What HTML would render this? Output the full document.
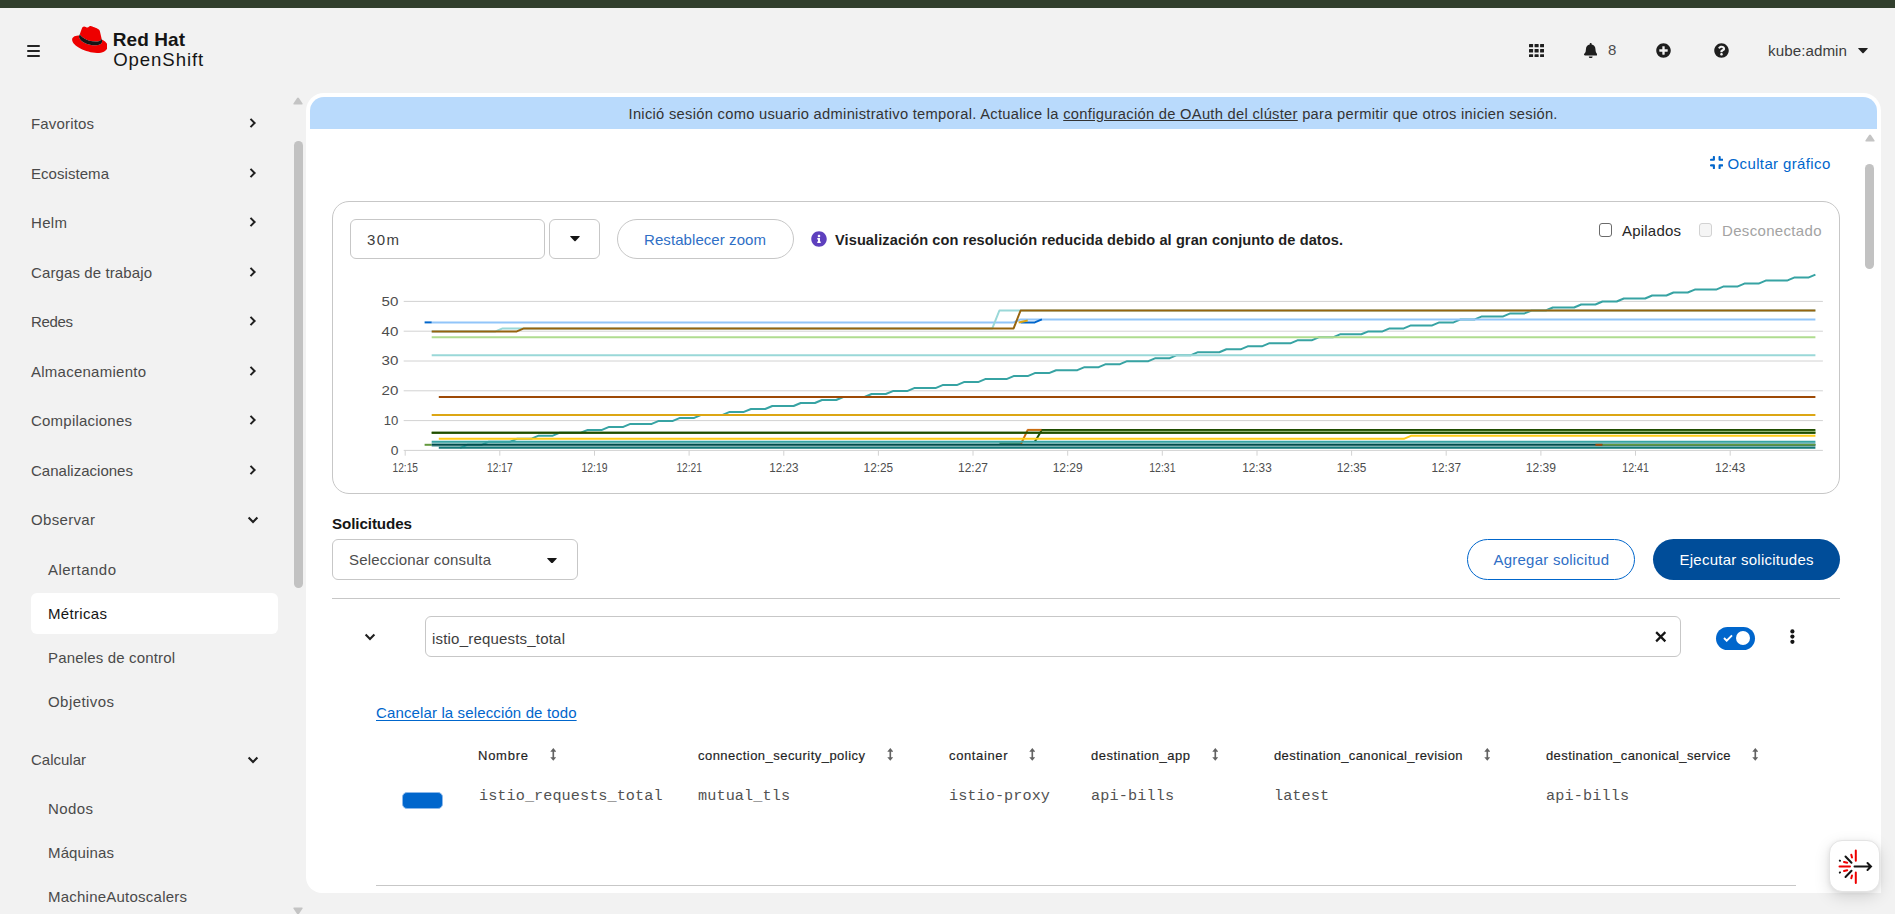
<!DOCTYPE html>
<html lang="es"><head><meta charset="utf-8"><title>Métricas · Red Hat OpenShift</title>
<style>
:root{--s:"Liberation Sans",sans-serif;--m:"Liberation Mono",monospace}
*{box-sizing:border-box}
html,body{margin:0;padding:0}
body{width:1895px;height:914px;overflow:hidden;background:#f2f2f2;font-family:var(--s);position:relative;color:#151515}
.abs{position:absolute;display:block}
.t{position:absolute;white-space:nowrap;line-height:20px;height:20px;font-family:var(--s)}
.box{position:absolute;background:#fff;border:1px solid #c7c7c7;border-radius:6px}
</style></head>
<body>

<div class="abs" style="left:0;top:0;width:1895px;height:7.5px;background:#313f2d"></div>
<!-- hamburger -->
<div class="abs" style="left:27px;top:45px;width:13.4px;height:2.4px;background:#242424;border-radius:1px"></div>
<div class="abs" style="left:27px;top:49.8px;width:13.4px;height:2.4px;background:#242424;border-radius:1px"></div>
<div class="abs" style="left:27px;top:54.6px;width:13.4px;height:2.4px;background:#242424;border-radius:1px"></div>
<!-- logo hat -->
<svg class="abs" style="left:71.6px;top:25.9px" width="35.8" height="27" viewBox="0 0 192 145"><path fill="#e00" d="M127.47,83.49c12.51,0,30.61-2.58,30.61-17.46a14,14,0,0,0-.31-3.42l-7.45-32.36c-1.72-7.12-3.23-10.35-15.73-16.6C124.89,8.69,103.76.5,97.51.5,91.69.5,90,8,83.06,8c-6.68,0-11.64-5.6-17.89-5.6-6,0-9.91,4.09-12.93,12.5,0,0-8.41,23.72-9.49,27.16A6.43,6.43,0,0,0,42.53,44c0,9.22,36.3,39.45,84.94,39.45M160,72.07c1.73,8.19,1.73,9.05,1.73,10.13,0,14-15.74,21.77-36.43,21.77C78.54,104,37.58,76.6,37.58,58.49a18.45,18.45,0,0,1,1.51-7.33C22.27,52,.5,55,.5,74.22c0,31.48,74.59,70.28,133.65,70.28,45.28,0,56.7-20.48,56.7-36.65,0-12.72-11-27.16-30.83-35.78"/><path fill="#151515" d="M160,72.07c1.73,8.19,1.73,9.05,1.73,10.13,0,14-15.74,21.77-36.43,21.77C78.54,104,37.58,76.6,37.58,58.49a18.45,18.45,0,0,1,1.51-7.33l3.66-9.06A6.43,6.43,0,0,0,42.53,44c0,9.22,36.3,39.45,84.94,39.45,12.51,0,30.61-2.58,30.61-17.46a14,14,0,0,0-.31-3.42Z"/></svg>
<!-- header icons -->
<svg class="abs" style="left:1529px;top:43.9px" width="15.2" height="13.5" viewBox="0 0 15.2 13.5" fill="#1f1f1f"><rect x="0" y="0" width="4.1" height="3.3" rx=".5"/><rect x="5.55" y="0" width="4.1" height="3.3" rx=".5"/><rect x="11.1" y="0" width="4.1" height="3.3" rx=".5"/><rect x="0" y="5.1" width="4.1" height="3.3" rx=".5"/><rect x="5.55" y="5.1" width="4.1" height="3.3" rx=".5"/><rect x="11.1" y="5.1" width="4.1" height="3.3" rx=".5"/><rect x="0" y="10.2" width="4.1" height="3.3" rx=".5"/><rect x="5.55" y="10.2" width="4.1" height="3.3" rx=".5"/><rect x="11.1" y="10.2" width="4.1" height="3.3" rx=".5"/></svg>
<svg class="abs" style="left:1583.8px;top:42.6px" width="13.4" height="15.3" viewBox="0 0 448 512"><path fill="#1f1f1f" d="M224 512c35.32 0 63.97-28.65 63.97-64H160.03c0 35.35 28.65 64 63.97 64zm215.39-149.71c-19.32-20.76-55.47-51.99-55.47-154.29 0-77.7-54.48-139.9-127.94-155.16V32c0-17.67-14.32-32-31.98-32s-31.98 14.33-31.98 32v20.84C118.56 68.1 64.08 130.3 64.08 208c0 102.3-36.15 133.53-55.47 154.29-6 6.45-8.66 14.16-8.61 21.71.11 16.4 12.98 32 32.1 32h383.8c19.12 0 32-15.6 32.1-32 .05-7.55-2.61-15.27-8.61-21.71z"/></svg>
<svg class="abs" style="left:1656.2px;top:43px" width="15" height="15" viewBox="0 0 512 512"><path fill="#1f1f1f" d="M256 8C119 8 8 119 8 256s111 248 248 248 248-111 248-248S393 8 256 8zm144 276c0 6.6-5.4 12-12 12h-92v92c0 6.6-5.4 12-12 12h-56c-6.6 0-12-5.4-12-12v-92h-92c-6.6 0-12-5.4-12-12v-56c0-6.6 5.4-12 12-12h92v-92c0-6.6 5.4-12 12-12h56c6.6 0 12 5.4 12 12v92h92c6.6 0 12 5.4 12 12v56z"/></svg>
<svg class="abs" style="left:1714.3px;top:43px" width="15" height="15" viewBox="0 0 512 512"><path fill="#1f1f1f" d="M504 256c0 136.997-111.043 248-248 248S8 392.997 8 256C8 119.083 119.043 8 256 8s248 111.083 248 248zM262.655 90c-54.497 0-89.255 22.957-116.549 63.758-3.536 5.286-2.353 12.415 2.715 16.258l34.699 26.310c5.205 3.947 12.621 3.008 16.665-2.122 17.864-22.658 30.113-35.797 57.303-35.797 20.429 0 45.698 13.148 45.698 32.958 0 14.976-12.363 22.667-32.534 33.976C247.128 238.528 216 254.941 216 296v4c0 6.627 5.373 12 12 12h56c6.627 0 12-5.373 12-12v-1.333c0-28.462 83.186-29.647 83.186-106.667 0-58.002-60.165-102-116.531-102zM256 338c-25.365 0-46 20.635-46 46 0 25.364 20.635 46 46 46s46-20.636 46-46c0-25.365-20.635-46-46-46z"/></svg>
<svg class="abs" style="left:1858px;top:48.3px" width="10" height="5.5" viewBox="0 0 10 5.5"><path d="M.7 0h8.6q.9 0 .3.7L5.6 5q-.6.6-1.2 0L.4.7Q-.2 0 .7 0z" fill="#1f1f1f"/></svg>
<!-- nav selected -->
<div class="abs" style="left:31px;top:593px;width:247px;height:41px;background:#fff;border-radius:6px"></div>
<!-- sidebar scrollbar -->
<svg class="abs" style="left:293.3px;top:97.3px" width="10" height="8" viewBox="0 0 10 8"><path d="M5 .5Q5.5 .5 5.9 1.1L9.6 6.5Q10 7.5 9 7.5H1Q0 7.5 .4 6.5L4.1 1.1Q4.5 .5 5 .5z" fill="#c4c4c4"/></svg>
<div class="abs" style="left:294px;top:141px;width:9.3px;height:447px;background:#c2c2c2;border-radius:4.5px"></div>
<svg class="abs" style="left:293.3px;top:906.5px" width="10" height="8" viewBox="0 0 10 8"><path d="M5 7.5Q5.5 7.5 5.9 6.9L9.6 1.5Q10 .5 9 .5H1Q0 .5 .4 1.5L4.1 6.9Q4.5 7.5 5 7.5z" fill="#c4c4c4"/></svg>
<!-- main card -->
<div class="abs" style="left:305.5px;top:93px;width:1575px;height:799.5px;background:#fff;border-radius:18px 18px 0 16px"></div>
<div class="abs" style="left:310px;top:96.8px;width:1566.5px;height:31.8px;background:#b9dafc;border-radius:14px 14px 0 0"></div>
<!-- inner scrollbar -->
<svg class="abs" style="left:1864.6px;top:133.5px" width="10" height="8" viewBox="0 0 10 8"><path d="M5 .5Q5.5 .5 5.9 1.1L9.6 6.5Q10 7.5 9 7.5H1Q0 7.5 .4 6.5L4.1 1.1Q4.5 .5 5 .5z" fill="#c4c4c4"/></svg>
<div class="abs" style="left:1865.3px;top:164px;width:9px;height:104.5px;background:#c2c2c2;border-radius:4.5px"></div>
<!-- ocultar icon -->
<svg class="abs" style="left:1709.5px;top:156px" width="13.5" height="13.2" viewBox="0 0 13.5 13.2" fill="none" stroke="#0066cc" stroke-width="2.1" stroke-linecap="round" stroke-linejoin="round"><path d="M1 3.8H3.9V1M9.6 1V3.8H12.5M12.5 9.4H9.6V12.2M3.9 12.2V9.4H1"/></svg>
<!-- chart card -->
<div class="abs" style="left:332px;top:201px;width:1507.5px;height:292.5px;border:1px solid #c7c7c7;border-radius:17px;background:#fff"></div>
<div class="box" style="left:350px;top:219px;width:194.6px;height:40px"></div>
<div class="box" style="left:549px;top:219px;width:50.5px;height:40px"></div>
<svg class="abs" style="left:569.5px;top:236.2px" width="10" height="5.5" viewBox="0 0 10 5.5"><path d="M.7 0h8.6q.9 0 .3.7L5.6 5q-.6.6-1.2 0L.4.7Q-.2 0 .7 0z" fill="#151515"/></svg>
<div class="box" style="left:617px;top:219px;width:176.5px;height:40px;border-radius:20px"></div>
<!-- info icon -->
<svg class="abs" style="left:810.5px;top:230.5px" width="16" height="16" viewBox="0 0 512 512"><path fill="#5e40be" d="M256 8C119.043 8 8 119.083 8 256c0 136.997 111.043 248 248 248s248-111.003 248-248C504 119.083 392.957 8 256 8zm0 110c23.196 0 42 18.804 42 42s-18.804 42-42 42-42-18.804-42-42 18.804-42 42-42zm56 254c0 6.627-5.373 12-12 12h-88c-6.627 0-12-5.373-12-12v-24c0-6.627 5.373-12 12-12h12v-64h-12c-6.627 0-12-5.373-12-12v-24c0-6.627 5.373-12 12-12h64c6.627 0 12 5.373 12 12v100h12c6.627 0 12 5.373 12 12v24z"/></svg>
<!-- checkboxes -->
<div class="abs" style="left:1599px;top:223.1px;width:13.4px;height:13.5px;border:1.3px solid #6a6a6a;border-radius:3px;background:#fff"></div>
<div class="abs" style="left:1699px;top:223.1px;width:13.4px;height:13.5px;border:1px solid #d2d2d2;border-radius:3px;background:#f5f5f5"></div>
<!-- select -->
<div class="box" style="left:332px;top:539.3px;width:245.8px;height:40.3px"></div>
<svg class="abs" style="left:547px;top:557.5px" width="10" height="5.5" viewBox="0 0 10 5.5"><path d="M.7 0h8.6q.9 0 .3.7L5.6 5q-.6.6-1.2 0L.4.7Q-.2 0 .7 0z" fill="#151515"/></svg>
<div class="abs" style="left:1467px;top:539px;width:167.7px;height:41px;border:1px solid #0066cc;border-radius:20.5px;background:#fff"></div>
<div class="abs" style="left:1653px;top:539px;width:186.8px;height:41px;border-radius:20.5px;background:#004d99"></div>
<div class="abs" style="left:332px;top:598px;width:1508px;height:1px;background:#c7c7c7"></div>
<!-- query row -->
<div class="box" style="left:425px;top:616.4px;width:1256px;height:40.2px"></div>
<svg class="abs" style="left:1655px;top:631px" width="11.5" height="11.5" viewBox="0 0 12 12"><path d="M1.2 1.2L10.8 10.8M10.8 1.2L1.2 10.8" stroke="#151515" stroke-width="2.3" fill="none"/></svg>
<div class="abs" style="left:1716px;top:627px;width:38.7px;height:22.7px;border-radius:12px;background:#0066cc"></div>
<div class="abs" style="left:1736.2px;top:631.2px;width:14px;height:14px;border-radius:50%;background:#fff"></div>
<svg class="abs" style="left:1722.5px;top:634px" width="10" height="8" viewBox="0 0 10 8"><path d="M1 4L3.7 6.7L9 1.3" stroke="#fff" stroke-width="1.9" fill="none"/></svg>
<svg class="abs" style="left:1789px;top:628px" width="7" height="17" viewBox="0 0 7 17"><circle cx="3.4" cy="3.4" r="2.1" fill="#151515"/><circle cx="3.4" cy="8.6" r="2.1" fill="#151515"/><circle cx="3.4" cy="13.8" r="2.1" fill="#151515"/></svg>
<!-- swatch -->
<div class="abs" style="left:402px;top:792px;width:40.5px;height:16.5px;border-radius:5px;background:#0066cc;border:1px solid #8bb8ea"></div>
<div class="abs" style="left:376px;top:885.1px;width:1420px;height:1px;background:#c7c7c7"></div>
<!-- floating button -->
<div class="abs" style="left:1829px;top:840px;width:50.7px;height:51.5px;border-radius:13px;background:#fff;border:1px solid #e4e4e4;box-shadow:0 5px 16px rgba(0,0,0,.13),0 1px 5px rgba(0,0,0,.07)"></div>
<svg class="abs" style="left:1837.2px;top:846.8px" width="38" height="38" viewBox="0 0 38 38" fill="none" stroke-linecap="round"><g stroke="#e00" stroke-width="2"><path d="M18.8 3.4V13.8M18.8 25.4V36M2.5 19.5H13M14.3 7.8L15 10.5M14.3 31.2L15 28.5M7 15L10.2 15.8M7 24L10.2 23.2"/></g><g stroke="#151515" stroke-width="2"><path d="M8.5 9.5L14.5 15.8M8.5 30L14.5 23.8M17.5 19.5H34M30.5 16L34 19.5L30.5 23M2.8 13.6L3 13.8M2.8 25.6L3 25.4"/></g></svg>

<svg class="abs" style="left:0;top:0" width="1895" height="914" viewBox="0 0 1895 914" fill="none">
<g fill="none" stroke-linecap="butt"><path d="M403.7 450.4H1822.9" stroke="#d2d2d2" stroke-width="1"/><path d="M403.7 420.6H1822.9" stroke="#d2d2d2" stroke-width="1"/><path d="M403.7 390.8H1822.9" stroke="#d2d2d2" stroke-width="1"/><path d="M403.7 361.0H1822.9" stroke="#d2d2d2" stroke-width="1"/><path d="M403.7 331.2H1822.9" stroke="#d2d2d2" stroke-width="1"/><path d="M403.7 301.4H1822.9" stroke="#d2d2d2" stroke-width="1"/><path d="M405.2 450.4v5.3" stroke="#d2d2d2" stroke-width="1"/><path d="M499.8 450.4v5.3" stroke="#d2d2d2" stroke-width="1"/><path d="M594.5 450.4v5.3" stroke="#d2d2d2" stroke-width="1"/><path d="M689.1 450.4v5.3" stroke="#d2d2d2" stroke-width="1"/><path d="M783.8 450.4v5.3" stroke="#d2d2d2" stroke-width="1"/><path d="M878.4 450.4v5.3" stroke="#d2d2d2" stroke-width="1"/><path d="M973.0 450.4v5.3" stroke="#d2d2d2" stroke-width="1"/><path d="M1067.7 450.4v5.3" stroke="#d2d2d2" stroke-width="1"/><path d="M1162.3 450.4v5.3" stroke="#d2d2d2" stroke-width="1"/><path d="M1257.0 450.4v5.3" stroke="#d2d2d2" stroke-width="1"/><path d="M1351.6 450.4v5.3" stroke="#d2d2d2" stroke-width="1"/><path d="M1446.2 450.4v5.3" stroke="#d2d2d2" stroke-width="1"/><path d="M1540.9 450.4v5.3" stroke="#d2d2d2" stroke-width="1"/><path d="M1635.5 450.4v5.3" stroke="#d2d2d2" stroke-width="1"/><path d="M1730.2 450.4v5.3" stroke="#d2d2d2" stroke-width="1"/><path d="M431.7 443.3H1815.4" stroke="#a5d6d6" stroke-width="1.6"/><path d="M431.7 446.3H1815.4" stroke="#9cc4c4" stroke-width="1.6"/><path d="M460.1 447.8L467.2 444.8L474.3 444.8L481.4 444.8L488.4 441.8L495.5 441.8L502.6 441.8L509.7 441.8L516.8 438.8L523.9 438.8L531.0 438.8L538.1 435.8L545.2 435.8L552.3 435.8L559.4 432.8L566.5 432.8L573.6 432.8L580.7 432.8L587.8 429.9L594.9 429.9L602.0 429.9L609.1 426.9L616.2 426.9L623.3 426.9L630.4 423.9L637.5 423.9L644.6 423.9L651.7 423.9L658.8 420.9L665.8 420.9L672.9 420.9L680.0 417.9L687.1 417.9L694.2 417.9L701.3 414.9L708.4 414.9L715.5 414.9L722.6 414.9L729.7 411.9L736.8 411.9L743.9 411.9L751.0 409.0L758.1 409.0L765.2 409.0L772.3 406.0L779.4 406.0L786.5 406.0L793.6 406.0L800.7 403.0L807.8 403.0L814.9 403.0L822.0 400.0L829.1 400.0L836.2 400.0L843.2 397.0L850.3 397.0L857.4 397.0L864.5 397.0L871.6 394.0L878.7 394.0L885.8 394.0L892.9 391.1L900.0 391.1L907.1 391.1L914.2 388.1L921.3 388.1L928.4 388.1L935.5 388.1L942.6 385.1L949.7 385.1L956.8 385.1L963.9 382.1L971.0 382.1L978.1 382.1L985.2 379.1L992.3 379.1L999.4 379.1L1006.5 379.1L1013.6 376.1L1020.6 376.1L1027.7 376.1L1034.8 373.1L1041.9 373.1L1049.0 373.1L1056.1 370.2L1063.2 370.2L1070.3 370.2L1077.4 370.2L1084.5 367.2L1091.6 367.2L1098.7 367.2L1105.8 364.2L1112.9 364.2L1120.0 364.2L1127.1 361.2L1134.2 361.2L1141.3 361.2L1148.4 361.2L1155.5 358.2L1162.6 358.2L1169.7 358.2L1176.8 355.2L1183.9 355.2L1191.0 355.2L1198.0 352.2L1205.1 352.2L1212.2 352.2L1219.3 352.2L1226.4 349.3L1233.5 349.3L1240.6 349.3L1247.7 346.3L1254.8 346.3L1261.9 346.3L1269.0 343.3L1276.1 343.3L1283.2 343.3L1290.3 343.3L1297.4 340.3L1304.5 340.3L1311.6 340.3L1318.7 337.3L1325.8 337.3L1332.9 337.3L1340.0 334.3L1347.1 334.3L1354.2 334.3L1361.3 334.3L1368.4 331.4L1375.4 331.4L1382.5 331.4L1389.6 328.4L1396.7 328.4L1403.8 328.4L1410.9 325.4L1418.0 325.4L1425.1 325.4L1432.2 325.4L1439.3 322.4L1446.4 322.4L1453.5 322.4L1460.6 319.4L1467.7 319.4L1474.8 319.4L1481.9 316.4L1489.0 316.4L1496.1 316.4L1503.2 316.4L1510.3 313.4L1517.4 313.4L1524.5 313.4L1531.6 310.5L1538.7 310.5L1545.8 310.5L1552.8 307.5L1559.9 307.5L1567.0 307.5L1574.1 307.5L1581.2 304.5L1588.3 304.5L1595.4 304.5L1602.5 301.5L1609.6 301.5L1616.7 301.5L1623.8 298.5L1630.9 298.5L1638.0 298.5L1645.1 298.5L1652.2 295.5L1659.3 295.5L1666.4 295.5L1673.5 292.5L1680.6 292.5L1687.7 292.5L1694.8 289.6L1701.9 289.6L1709.0 289.6L1716.1 289.6L1723.2 286.6L1730.2 286.6L1737.3 286.6L1744.4 283.6L1751.5 283.6L1758.6 283.6L1765.7 280.6L1772.8 280.6L1779.9 280.6L1787.0 280.6L1794.1 277.6L1801.2 277.6L1808.3 277.6L1815.4 274.6" stroke="#37a3a3" stroke-width="2" stroke-linejoin="round"/><path d="M1020.6 444.8L1027.7 429.9" stroke="#ca6c0f" stroke-width="2" stroke-linejoin="round"/><path d="M1034.8 441.8L1041.9 429.9" stroke="#204d00" stroke-width="2" stroke-linejoin="round"/><path d="M431.7 322.4L1013.6 322.4L1020.6 319.4L1815.4 319.4" stroke="#92c5f9" stroke-width="2" stroke-linejoin="round"/><path d="M424.6 322.4L431.7 322.4" stroke="#0066cc" stroke-width="2" stroke-linejoin="round"/><path d="M1020.6 322.4L1034.8 322.4L1041.9 319.4" stroke="#0066cc" stroke-width="2" stroke-linejoin="round"/><path d="M1018.6 322.4L1027.7 320.6" stroke="#dca614" stroke-width="2" stroke-linejoin="round"/><path d="M431.7 331.4L495.5 331.4L502.6 328.4L992.3 328.4L999.4 310.5L1815.4 310.5" stroke="#9ad8d8" stroke-width="2" stroke-linejoin="round"/><path d="M431.7 337.3H1815.4" stroke="#afdc8f" stroke-width="2"/><path d="M431.7 355.2H1815.4" stroke="#9ad8d8" stroke-width="2"/><path d="M431.7 331.4L516.8 331.4L523.9 328.4L1013.6 328.4L1020.6 310.5L1815.4 310.5" stroke="#96640f" stroke-width="2" stroke-linejoin="round"/><path d="M438.8 397.0H1815.4" stroke="#9e4a06" stroke-width="2"/><path d="M431.7 414.9H1815.4" stroke="#dca614" stroke-width="2"/><path d="M431.7 441.8H1815.4" stroke="#37a3a3" stroke-width="2"/><path d="M424.6 444.8L431.7 444.8" stroke="#63993d" stroke-width="2" stroke-linejoin="round"/><path d="M431.7 444.8H1815.4" stroke="#004d4d" stroke-width="2"/><path d="M438.8 447.8H1815.4" stroke="#147878" stroke-width="2"/><path d="M999.4 443.3H1020.6" stroke="#2e7f68" stroke-width="1.2"/><path d="M1595.4 444.8L1602.5 444.8" stroke="#9e4a06" stroke-width="2" stroke-linejoin="round"/><path d="M1602.5 444.8H1815.4" stroke="#63993d" stroke-width="1.6"/><path d="M438.8 438.8L1403.8 438.8L1410.9 435.8L1815.4 435.8" stroke="#ffcc17" stroke-width="2" stroke-linejoin="round"/><path d="M431.7 432.8H1815.4" stroke="#3d7317" stroke-width="2"/><path d="M431.7 432.8H1815.4" stroke="#204d00" stroke-width="2"/><path d="M1027.2 429.9L1041.9 429.9" stroke="#ca6c0f" stroke-width="2" stroke-linejoin="round"/><path d="M1041.5 429.9L1815.4 429.9" stroke="#204d00" stroke-width="2" stroke-linejoin="round"/><path d="M1041.9 431.3H1815.4" stroke="#8fb46d" stroke-width="1"/></g>
<g font-family="Liberation Sans, sans-serif" font-size="12.3" fill="#4d4d4d" stroke="none"><text x="390.7" y="454.8" font-size="11.9" textLength="7.7" lengthAdjust="spacingAndGlyphs">0</text><text x="383.8" y="425.0" font-size="11.9" textLength="14.6" lengthAdjust="spacingAndGlyphs">10</text><text x="381.6" y="395.2" font-size="11.9" textLength="16.8" lengthAdjust="spacingAndGlyphs">20</text><text x="381.6" y="365.4" font-size="11.9" textLength="16.8" lengthAdjust="spacingAndGlyphs">30</text><text x="381.6" y="335.6" font-size="11.9" textLength="16.8" lengthAdjust="spacingAndGlyphs">40</text><text x="381.6" y="305.8" font-size="11.9" textLength="16.8" lengthAdjust="spacingAndGlyphs">50</text><text x="392.6" y="472" textLength="25.3" lengthAdjust="spacingAndGlyphs">12:15</text><text x="487.1" y="472" textLength="25.5" lengthAdjust="spacingAndGlyphs">12:17</text><text x="581.4" y="472" textLength="26.1" lengthAdjust="spacingAndGlyphs">12:19</text><text x="676.4" y="472" textLength="25.5" lengthAdjust="spacingAndGlyphs">12:21</text><text x="769.2" y="472" textLength="29.2" lengthAdjust="spacingAndGlyphs">12:23</text><text x="863.6" y="472" textLength="29.5" lengthAdjust="spacingAndGlyphs">12:25</text><text x="958.1" y="472" textLength="29.8" lengthAdjust="spacingAndGlyphs">12:27</text><text x="1052.7" y="472" textLength="30.0" lengthAdjust="spacingAndGlyphs">12:29</text><text x="1149.2" y="472" textLength="26.3" lengthAdjust="spacingAndGlyphs">12:31</text><text x="1242.2" y="472" textLength="29.5" lengthAdjust="spacingAndGlyphs">12:33</text><text x="1336.8" y="472" textLength="29.5" lengthAdjust="spacingAndGlyphs">12:35</text><text x="1431.5" y="472" textLength="29.5" lengthAdjust="spacingAndGlyphs">12:37</text><text x="1525.7" y="472" textLength="30.3" lengthAdjust="spacingAndGlyphs">12:39</text><text x="1622.3" y="472" textLength="26.5" lengthAdjust="spacingAndGlyphs">12:41</text><text x="1715.0" y="472" textLength="30.3" lengthAdjust="spacingAndGlyphs">12:43</text></g>
</svg>
<svg class="abs" style="left:248.5px;top:117px" width="8" height="12" viewBox="0 0 8 12"><path d="M1.5 1.9L5.6 6L1.5 10.1" fill="none" stroke="#1f1f1f" stroke-width="2"/></svg><svg class="abs" style="left:248.5px;top:167px" width="8" height="12" viewBox="0 0 8 12"><path d="M1.5 1.9L5.6 6L1.5 10.1" fill="none" stroke="#1f1f1f" stroke-width="2"/></svg><svg class="abs" style="left:248.5px;top:216px" width="8" height="12" viewBox="0 0 8 12"><path d="M1.5 1.9L5.6 6L1.5 10.1" fill="none" stroke="#1f1f1f" stroke-width="2"/></svg><svg class="abs" style="left:248.5px;top:266px" width="8" height="12" viewBox="0 0 8 12"><path d="M1.5 1.9L5.6 6L1.5 10.1" fill="none" stroke="#1f1f1f" stroke-width="2"/></svg><svg class="abs" style="left:248.5px;top:315px" width="8" height="12" viewBox="0 0 8 12"><path d="M1.5 1.9L5.6 6L1.5 10.1" fill="none" stroke="#1f1f1f" stroke-width="2"/></svg><svg class="abs" style="left:248.5px;top:365px" width="8" height="12" viewBox="0 0 8 12"><path d="M1.5 1.9L5.6 6L1.5 10.1" fill="none" stroke="#1f1f1f" stroke-width="2"/></svg><svg class="abs" style="left:248.5px;top:414px" width="8" height="12" viewBox="0 0 8 12"><path d="M1.5 1.9L5.6 6L1.5 10.1" fill="none" stroke="#1f1f1f" stroke-width="2"/></svg><svg class="abs" style="left:248.5px;top:464px" width="8" height="12" viewBox="0 0 8 12"><path d="M1.5 1.9L5.6 6L1.5 10.1" fill="none" stroke="#1f1f1f" stroke-width="2"/></svg><svg class="abs" style="left:246.5px;top:515.5px" width="12" height="8" viewBox="0 0 12 8"><path d="M1.6 1.6L6 6L10.4 1.6" fill="none" stroke="#1f1f1f" stroke-width="2.1"/></svg><svg class="abs" style="left:246.5px;top:755.5px" width="12" height="8" viewBox="0 0 12 8"><path d="M1.6 1.6L6 6L10.4 1.6" fill="none" stroke="#1f1f1f" stroke-width="2.1"/></svg><svg class="abs" style="left:363.5px;top:633px" width="12" height="8" viewBox="0 0 12 8"><path d="M1.6 1.6L6 6L10.4 1.6" fill="none" stroke="#1f1f1f" stroke-width="2.1"/></svg><svg class="abs" style="left:549.6px;top:748.2px" width="6.6" height="12.8" viewBox="0 0 7 14"><path d="M3.5 0L6.8 4H4.4V10H6.8L3.5 14L.2 10H2.6V4H.2z" fill="#636363"/></svg><svg class="abs" style="left:886.6px;top:748.2px" width="6.6" height="12.8" viewBox="0 0 7 14"><path d="M3.5 0L6.8 4H4.4V10H6.8L3.5 14L.2 10H2.6V4H.2z" fill="#636363"/></svg><svg class="abs" style="left:1028.6px;top:748.2px" width="6.6" height="12.8" viewBox="0 0 7 14"><path d="M3.5 0L6.8 4H4.4V10H6.8L3.5 14L.2 10H2.6V4H.2z" fill="#636363"/></svg><svg class="abs" style="left:1211.6px;top:748.2px" width="6.6" height="12.8" viewBox="0 0 7 14"><path d="M3.5 0L6.8 4H4.4V10H6.8L3.5 14L.2 10H2.6V4H.2z" fill="#636363"/></svg><svg class="abs" style="left:1483.6px;top:748.2px" width="6.6" height="12.8" viewBox="0 0 7 14"><path d="M3.5 0L6.8 4H4.4V10H6.8L3.5 14L.2 10H2.6V4H.2z" fill="#636363"/></svg><svg class="abs" style="left:1751.6px;top:748.2px" width="6.6" height="12.8" viewBox="0 0 7 14"><path d="M3.5 0L6.8 4H4.4V10H6.8L3.5 14L.2 10H2.6V4H.2z" fill="#636363"/></svg>
<span class="t" style="left:112.8px;top:29.8px;font-size:19px;color:#151515;font-weight:700;letter-spacing:0.084px;">Red Hat</span>
<span class="t" style="left:113.2px;top:49.6px;font-size:18.6px;color:#151515;letter-spacing:0.912px;">OpenShift</span>
<span class="t" style="left:1608.0px;top:40.0px;font-size:15px;color:#4d4d4d;">8</span>
<span class="t" style="left:1768.0px;top:40.5px;font-size:15.2px;color:#3d3d3d;letter-spacing:0.052px;">kube:admin</span>
<span class="t" style="left:31.0px;top:113.5px;font-size:15px;color:#4a4a4a;letter-spacing:0.164px;">Favoritos</span>
<span class="t" style="left:31.0px;top:163.5px;font-size:15px;color:#4a4a4a;letter-spacing:0.052px;">Ecosistema</span>
<span class="t" style="left:31.0px;top:212.5px;font-size:15px;color:#4a4a4a;letter-spacing:0.328px;">Helm</span>
<span class="t" style="left:31.0px;top:262.5px;font-size:15px;color:#4a4a4a;letter-spacing:0.109px;">Cargas de trabajo</span>
<span class="t" style="left:31.0px;top:311.5px;font-size:15px;color:#4a4a4a;letter-spacing:-0.340px;">Redes</span>
<span class="t" style="left:31.0px;top:361.5px;font-size:15px;color:#4a4a4a;letter-spacing:0.251px;">Almacenamiento</span>
<span class="t" style="left:31.0px;top:410.5px;font-size:15px;color:#4a4a4a;letter-spacing:0.217px;">Compilaciones</span>
<span class="t" style="left:31.0px;top:460.5px;font-size:15px;color:#4a4a4a;letter-spacing:0.020px;">Canalizaciones</span>
<span class="t" style="left:31.0px;top:509.5px;font-size:15px;color:#4a4a4a;letter-spacing:0.330px;">Observar</span>
<span class="t" style="left:48.0px;top:559.5px;font-size:15px;color:#4a4a4a;letter-spacing:0.473px;">Alertando</span>
<span class="t" style="left:48.0px;top:603.5px;font-size:15px;color:#151515;letter-spacing:0.330px;">Métricas</span>
<span class="t" style="left:48.0px;top:647.5px;font-size:15px;color:#4a4a4a;letter-spacing:0.162px;">Paneles de control</span>
<span class="t" style="left:48.0px;top:691.5px;font-size:15px;color:#4a4a4a;letter-spacing:0.434px;">Objetivos</span>
<span class="t" style="left:31.0px;top:749.5px;font-size:15px;color:#4a4a4a;">Calcular</span>
<span class="t" style="left:48.0px;top:798.5px;font-size:15px;color:#4a4a4a;letter-spacing:0.410px;">Nodos</span>
<span class="t" style="left:48.0px;top:842.5px;font-size:15px;color:#4a4a4a;letter-spacing:0.136px;">Máquinas</span>
<span class="t" style="left:48.0px;top:886.5px;font-size:15px;color:#4a4a4a;letter-spacing:0.231px;">MachineAutoscalers</span>
<span class="t" style="left:628.5px;top:104.0px;font-size:14.7px;color:#333333;letter-spacing:0.295px;">Inició sesión como usuario administrativo temporal. Actualice la <u>configuración de OAuth del clúster</u> para permitir que otros inicien sesión.</span>
<span class="t" style="left:1727.5px;top:153.5px;font-size:15px;color:#0066cc;letter-spacing:0.375px;">Ocultar gráfico</span>
<span class="t" style="left:367.0px;top:229.5px;font-size:15px;color:#3d3d3d;letter-spacing:1.406px;">30m</span>
<span class="t" style="left:644.0px;top:229.5px;font-size:15px;color:#2f6fc6;letter-spacing:0.074px;">Restablecer zoom</span>
<span class="t" style="left:835.0px;top:229.5px;font-size:14.6px;color:#1f1f1f;font-weight:700;letter-spacing:0.079px;">Visualización con resolución reducida debido al gran conjunto de datos.</span>
<span class="t" style="left:1622.0px;top:221.0px;font-size:15px;color:#262626;letter-spacing:0.208px;">Apilados</span>
<span class="t" style="left:1722.0px;top:221.0px;font-size:15px;color:#a3a3a3;letter-spacing:0.327px;">Desconectado</span>
<span class="t" style="left:332.0px;top:513.5px;font-size:15.2px;color:#151515;font-weight:700;letter-spacing:-0.103px;">Solicitudes</span>
<span class="t" style="left:349.0px;top:550.0px;font-size:15px;color:#4d4d4d;letter-spacing:0.188px;">Seleccionar consulta</span>
<span class="t" style="left:1493.5px;top:550.0px;font-size:15px;color:#2f6fc6;letter-spacing:0.235px;">Agregar solicitud</span>
<span class="t" style="left:1679.5px;top:550.0px;font-size:15px;color:#ffffff;letter-spacing:0.251px;">Ejecutar solicitudes</span>
<span class="t" style="left:432.0px;top:628.5px;font-size:15px;color:#3d3d3d;letter-spacing:0.197px;">istio_requests_total</span>
<span class="t" style="left:376.0px;top:702.5px;font-size:15px;color:#0066cc;letter-spacing:0.132px;text-decoration:underline;text-underline-offset:2px;">Cancelar la selección de todo</span>
<span class="t" style="left:478.0px;top:745.5px;font-size:13px;color:#1f1f1f;letter-spacing:0.750px;-webkit-text-stroke:0.18px #1f1f1f;">Nombre</span>
<span class="t" style="left:698.0px;top:745.5px;font-size:13px;color:#1f1f1f;letter-spacing:0.465px;-webkit-text-stroke:0.18px #1f1f1f;">connection_security_policy</span>
<span class="t" style="left:949.0px;top:745.5px;font-size:13px;color:#1f1f1f;letter-spacing:0.627px;-webkit-text-stroke:0.18px #1f1f1f;">container</span>
<span class="t" style="left:1091.0px;top:745.5px;font-size:13px;color:#1f1f1f;letter-spacing:0.513px;-webkit-text-stroke:0.18px #1f1f1f;">destination_app</span>
<span class="t" style="left:1274.0px;top:745.5px;font-size:13px;color:#1f1f1f;letter-spacing:0.394px;-webkit-text-stroke:0.18px #1f1f1f;">destination_canonical_revision</span>
<span class="t" style="left:1546.0px;top:745.5px;font-size:13px;color:#1f1f1f;letter-spacing:0.395px;-webkit-text-stroke:0.18px #1f1f1f;">destination_canonical_service</span>
<span class="t" style="left:479.0px;top:786.0px;font-size:15.2px;color:#525252;font-family:var(--m);letter-spacing:0.064px;">istio_requests_total</span>
<span class="t" style="left:698.0px;top:786.0px;font-size:15.2px;color:#525252;font-family:var(--m);letter-spacing:0.095px;">mutual_tls</span>
<span class="t" style="left:949.0px;top:786.0px;font-size:15.2px;color:#525252;font-family:var(--m);letter-spacing:0.073px;">istio-proxy</span>
<span class="t" style="left:1091.0px;top:786.0px;font-size:15.2px;color:#525252;font-family:var(--m);letter-spacing:0.121px;">api-bills</span>
<span class="t" style="left:1274.0px;top:786.0px;font-size:15.2px;color:#525252;font-family:var(--m);letter-spacing:0.062px;">latest</span>
<span class="t" style="left:1546.0px;top:786.0px;font-size:15.2px;color:#525252;font-family:var(--m);letter-spacing:0.121px;">api-bills</span>

</body></html>
